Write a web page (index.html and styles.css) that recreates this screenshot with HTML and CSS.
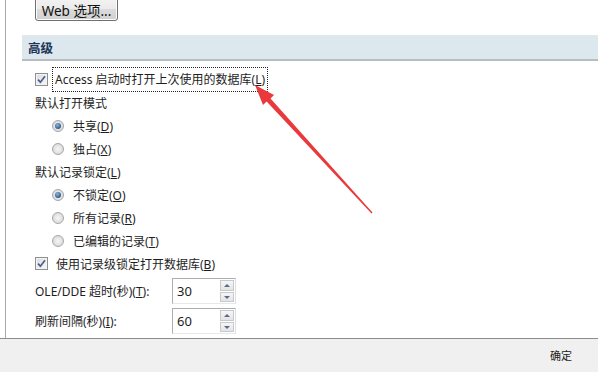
FILE: index.html
```html
<!DOCTYPE html>
<html lang="zh-CN">
<head>
<meta charset="utf-8">
<link rel="stylesheet" href="styles.css">
</head>
<body>
<div class="page">
  <div class="main">
    <div class="btn-row"><div class="btn">Web 选项...</div></div>
    <div class="section">高级</div>
    <div class="opts">
      <div class="row chk-row"><span class="chk"><svg width="9" height="9" viewBox="0 0 9 9"><path d="M1 4.6 L3.4 7.2 L8 1.3" fill="none" stroke="#4b5f90" stroke-width="1.7"/></svg></span><span class="focus">Access 启动时打开上次使用的数据库(<u>L</u>)</span></div>
      <div class="row">默认打开模式</div>
      <div class="row rad-row"><span class="rad on"></span><span>共享(<u>D</u>)</span></div>
      <div class="row rad-row"><span class="rad"></span><span>独占(<u>X</u>)</span></div>
      <div class="row"><span>默认记录锁定(<u>L</u>)</span></div>
      <div class="row rad-row"><span class="rad on"></span><span>不锁定(<u>O</u>)</span></div>
      <div class="row rad-row"><span class="rad"></span><span>所有记录(<u>R</u>)</span></div>
      <div class="row rad-row"><span class="rad"></span><span>已编辑的记录(<u>T</u>)</span></div>
      <div class="row chk-row"><span class="chk"><svg width="9" height="9" viewBox="0 0 9 9"><path d="M1 4.6 L3.4 7.2 L8 1.3" fill="none" stroke="#4b5f90" stroke-width="1.7"/></svg></span><span class="plain">使用记录级锁定打开数据库(<u>B</u>)</span></div>
      <div class="spin-row"><span class="lbl">OLE/DDE 超时(秒)(<u>T</u>):</span><div class="spin"><span class="val">30</span><span class="arrows"><span class="up"></span><span class="dn"></span></span></div></div>
      <div class="spin-row"><span class="lbl">刷新间隔(秒)(<u>I</u>):</span><div class="spin"><span class="val">60</span><span class="arrows"><span class="up"></span><span class="dn"></span></span></div></div>
    </div>
  </div>
  <div class="footer"><span class="ok">确定</span></div>
  <svg class="arrow" width="598" height="372" viewBox="0 0 598 372">
    <polygon points="255,85 274,95 270.5,98.4 372.5,212.6 371.5,213.4 266.6,101.6 263,105" fill="#e9393d"/>
  </svg>
</div>
</body>
</html>
```
FILE: styles.css
```css
* { box-sizing: border-box; }
html, body { margin: 0; padding: 0; background: #fff; }
body {
  font-family: "Noto Sans", "Noto Sans CJK SC", sans-serif;
  font-size: 12px;
  color: #1e1e1e;
}
.page {
  position: relative;
  width: 598px;
  height: 372px;
  overflow: hidden;
  display: flex;
  flex-direction: column;
}
.main {
  margin-left: 5px;
  height: 338px;
  border-left: 1px solid #a9a9a9;
  display: flex;
  flex-direction: column;
  overflow: hidden;
}
.btn-row { padding-left: 29px; margin-top: -4px; }
.btn {
  width: 83px;
  height: 25px;
  border: 1px solid #707070;
  border-radius: 3px;
  background: linear-gradient(#f4f4f4, #ebebeb 50%, #dcdcdc 51%, #d0d0d0);
  box-shadow: inset 0 0 0 1px #fbfbfb;
  font-size: 13.5px;
  display: flex;
  align-items: center;
  justify-content: center;
  padding-top: 2px;
  color: #111;
}
.section {
  margin-top: 14px;
  margin-left: 16px;
  height: 26px;
  background: #dce7ee;
  border-top: 1px solid #e3e8eb;
  border-bottom: 2px solid #b5bec3;
  padding-left: 6px;
  display: flex;
  align-items: center;
  font-weight: bold;
  font-size: 12.5px;
  color: #1d3557;
}
.opts { margin-top: 7px; padding-left: 29px; display: flex; flex-direction: column; }
.row { height: 23px; display: flex; align-items: center; white-space: nowrap; }
.chk-row { gap: 5px; }
.chk {
  width: 13px; height: 13px;
  border: 1px solid #8e8f8f;
  background: linear-gradient(135deg, #dcdcdc, #f8f8f8);
  display: flex; align-items: center; justify-content: center;
  box-shadow: inset 0 0 0 1px #f4f4f4;
}
.focus { outline: 1px dotted #222; outline-offset: 0; padding: 2px 2px 3px 2px; }
.plain { padding-left: 3px; }
.rad-row { padding-left: 17px; gap: 9px; }
.rad {
  width: 12px; height: 12px;
  border-radius: 50%;
  border: 1px solid #a6a6a6;
  background: radial-gradient(circle at 50% 50%, #f6f6f6 0, #e0e0e0 60%, #d4d4d4 100%);
  position: relative;
}
.rad.on::after {
  content: "";
  position: absolute;
  left: 2px; top: 2px;
  width: 6px; height: 6px;
  border-radius: 50%;
  background: radial-gradient(circle at 40% 35%, #8fb6dd, #2a5b8e 70%, #1e3f66);
}
.spin-row { display: flex; align-items: center; height: 26px; margin-top: 3px; }
.spin-row + .spin-row { margin-top: 4px; }
.lbl { width: 137px; white-space: nowrap; }
.spin {
  width: 64px; height: 26px;
  border: 1px solid #abadb3;
  border-right-color: #dbdfe6;
  border-bottom-color: #e3e9ef;
  display: flex;
}
.val { flex: 1; padding-left: 4px; display: flex; align-items: center; font-size: 13px; }
.arrows { width: 15px; display: flex; flex-direction: column; gap: 1px; padding: 1px 1px 1px 0; }
.up, .dn {
  flex: 1;
  border: 1px solid #c9c9c9;
  background: linear-gradient(#f6f6f6, #e4e4e4);
  position: relative;
}
.up::after, .dn::after {
  content: "";
  position: absolute;
  left: 3px; top: 3px;
  border-left: 3px solid transparent;
  border-right: 3px solid transparent;
}
.up::after { border-bottom: 3px solid #5a6a8a; }
.dn::after { border-top: 3px solid #5a6a8a; }
.footer {
  flex: 1;
  background: #f0f0f0;
  border-top: 1px solid #8d8d8d;
  display: flex;
  justify-content: flex-end;
  padding: 8px 26px 0 0;
}
.ok { font-size: 11px; color: #222; }
.arrow { position: absolute; left: 0; top: 0; pointer-events: none; }
```
